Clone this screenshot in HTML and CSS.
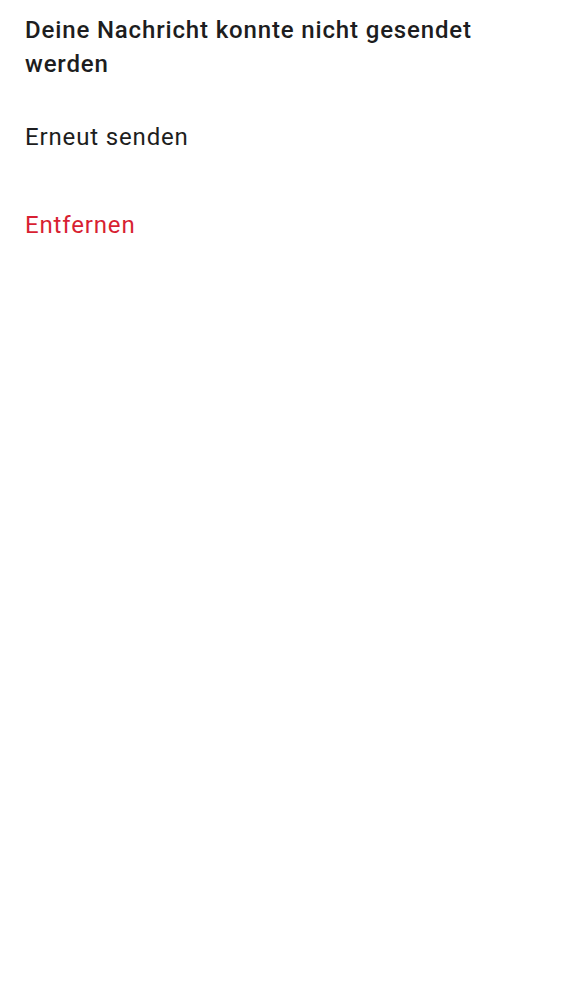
FILE: index.html
```html
<!DOCTYPE html>
<html lang="de">
<head>
<meta charset="utf-8">
<link rel="stylesheet" href="styles.css">
</head>
<body>
<div class="sheet">
  <h1 class="title">Deine Nachricht konnte nicht gesendet werden</h1>
  <div class="actions">
    <div class="action">Erneut senden</div>
    <div class="action danger">Entfernen</div>
  </div>
</div>
</body>
</html>
```
FILE: styles.css
```css
html, body {
  margin: 0;
  padding: 0;
  background: #ffffff;
}
body {
  font-family: Roboto, "Noto Sans", sans-serif;
  color: #1d1d20;
}
.sheet {
  padding: 13px 25px 0 25px;
  width: 470px;
}
.title {
  margin: 0;
  font-size: 24px;
  font-weight: 500;
  line-height: 34px;
  letter-spacing: 0.85px;
}
.actions {
  display: flex;
  flex-direction: column;
  margin-top: 32px;
}
.action {
  font-size: 24px;
  line-height: 34px;
  padding: 7px 0 47px;
  letter-spacing: 0.85px;
}
.danger {
  color: #d81f32;
}
```
